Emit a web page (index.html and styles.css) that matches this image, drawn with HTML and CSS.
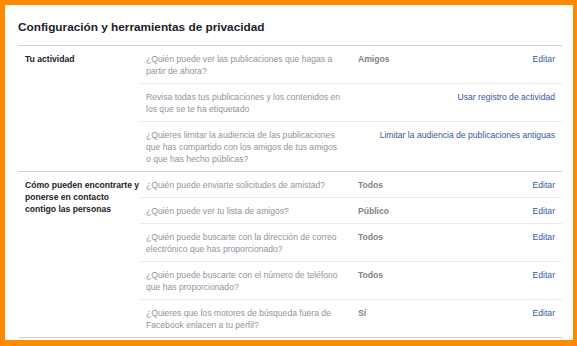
FILE: index.html
```html
<!DOCTYPE html>
<html lang="es">
<head>
    <meta charset="UTF-8">
    <meta name="viewport" content="width=device-width, initial-scale=1.0">
    <title>Configuración y herramientas de privacidad</title>
    <link rel="stylesheet" href="styles.css">
</head>
<body>

    <div class="panel">
        <h1>Configuración y herramientas de privacidad</h1>

        <div class="section">
            <div class="label">Tu actividad</div>
            <div class="rows">
                <div class="row">
                    <div class="question">¿Quién puede ver las publicaciones que hagas a partir de ahora?</div>
                    <div class="value">Amigos</div>
                    <a class="action">Editar</a>
                </div>
                <div class="row">
                    <div class="question">Revisa todas tus publicaciones y los contenidos en los que se te ha etiquetado</div>
                    <a class="action wide">Usar registro de actividad</a>
                </div>
                <div class="row">
                    <div class="question">¿Quieres limitar la audiencia de las publicaciones que has compartido con los amigos de tus amigos o que has hecho públicas?</div>
                    <a class="action wide">Limitar la audiencia de publicaciones antiguas</a>
                </div>
            </div>
        </div>

        <div class="section last">
            <div class="label">Cómo pueden encontrarte y ponerse en contacto contigo las personas</div>
            <div class="rows">
                <div class="row">
                    <div class="question">¿Quién puede enviarte solicitudes de amistad?</div>
                    <div class="value">Todos</div>
                    <a class="action">Editar</a>
                </div>
                <div class="row">
                    <div class="question">¿Quién puede ver tu lista de amigos?</div>
                    <div class="value">Público</div>
                    <a class="action">Editar</a>
                </div>
                <div class="row">
                    <div class="question">¿Quién puede buscarte con la dirección de correo electrónico que has proporcionado?</div>
                    <div class="value">Todos</div>
                    <a class="action">Editar</a>
                </div>
                <div class="row">
                    <div class="question">¿Quién puede buscarte con el número de teléfono que has proporcionado?</div>
                    <div class="value">Todos</div>
                    <a class="action">Editar</a>
                </div>
                <div class="row">
                    <div class="question">¿Quieres que los motores de búsqueda fuera de Facebook enlacen a tu perfil?</div>
                    <div class="value">Sí</div>
                    <a class="action">Editar</a>
                </div>
            </div>
        </div>
    </div>

</body>
</html>
```

FILE: styles.css
```css
body {
    margin: 0;
    font-family: "Liberation Sans", Arial, sans-serif;
    font-size: 8.6px;
    line-height: 12px;
}
.panel {
    box-sizing: border-box;
    width: 577px;
    height: 346px;
    border: 5px solid #ff8a00;
    border-right-width: 4px;
    border-bottom-width: 6px;
    background: #fff;
    padding: 0 11px 0 13px;
}
h1 {
    margin: 0;
    height: 40px;
    line-height: 45px;
    font-size: 11.8px;
    color: #1d2129;
}
.section {
    display: flex;
    border-top: 1px solid #ccd0d5;
}
.section.last {
    border-bottom: 1px solid #ccd0d5;
}
.label {
    box-sizing: border-box;
    width: 122px;
    padding: 7px 0 0 7px;
    font-weight: bold;
    color: #1d2129;
}
.rows {
    flex: 1;
}
.row {
    display: grid;
    grid-template-columns: 195px 1fr auto;
    column-gap: 17px;
    padding: 7px 7px 6px 6px;
    border-top: 1px solid #e9ebee;
}
.row:first-child {
    border-top: none;
}
.question {
    color: #90949c;
}
.value {
    font-weight: bold;
    color: #7f8389;
}
.action {
    color: #365899;
    text-align: right;
}
.action.wide {
    grid-column: 2 / 4;
}
```
